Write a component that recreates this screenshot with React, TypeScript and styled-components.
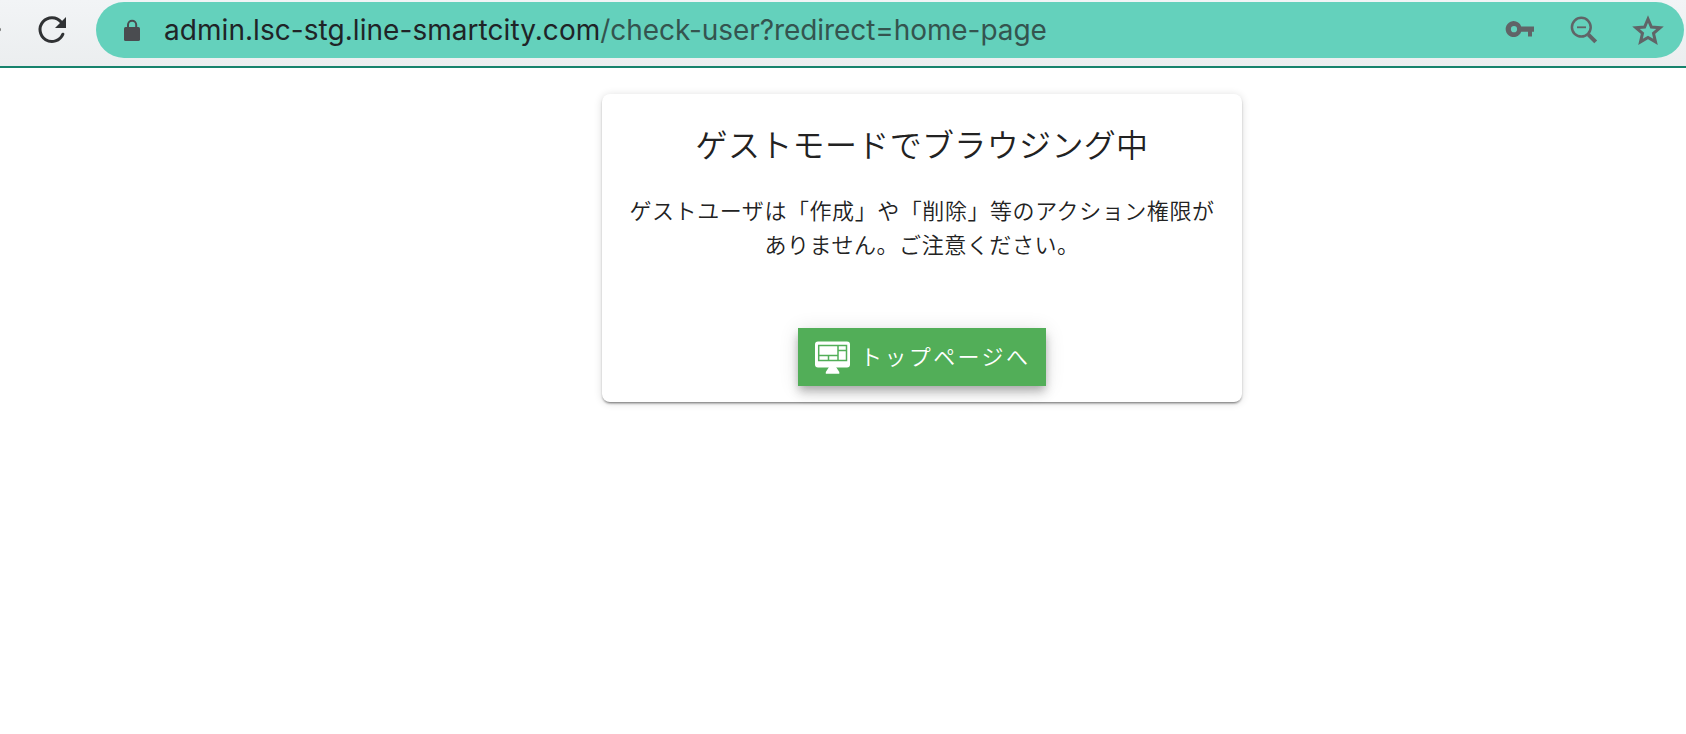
import React from "react";
import styled, { createGlobalStyle } from "styled-components";

const GlobalStyle = createGlobalStyle`
  * { box-sizing: border-box; }
  body { margin: 0; background: #fff; }
`;

const Page = styled.div`
  min-height: 734px;
  overflow: hidden;
  background: #fff;
`;

const Toolbar = styled.header`
  display: flex;
  height: 68px;
  padding: 2px 2px 0 0;
  border-bottom: 2px solid #16836c;
  background: linear-gradient(#f2f4f6, #ebeeef);
`;

const Navigation = styled.div`
  display: flex;
  align-items: flex-start;
  width: 96px;
`;

const AddressBar = styled.div`
  display: flex;
  flex: 1;
  height: 56px;
  padding: 0 20px 0 28px;
  border-radius: 28px;
  background: #64d1bc;
`;

const Url = styled.div`
  flex: 1;
  margin-left: 24px;
  font: 400 28px/57px Inter, "Liberation Sans", sans-serif;
  letter-spacing: 0.05px;
  white-space: nowrap;
  color: #1f2427;
`;

const UrlPath = styled.span`
  letter-spacing: -0.07px;
  color: #34544f;
`;

const Actions = styled.div`
  display: flex;
  gap: 34px;
`;

const Icon = styled.svg<{ $w: number }>`
  display: block;
  flex: none;
  width: ${(p) => p.$w}px;
  height: 56px;
`;

const Card = styled.main`
  width: 640px;
  height: 308px;
  margin: 26px 0 0 602px;
  padding: 23px 24px 16px;
  display: flex;
  flex-direction: column;
  align-items: center;
  border-radius: 8px;
  background: #fff;
  box-shadow: 0 3px 1px -2px rgba(0, 0, 0, 0.2), 0 2px 2px rgba(0, 0, 0, 0.24),
    0 1px 8px rgba(0, 0, 0, 0.14);
  font-family: "Noto Sans CJK JP", sans-serif;
  color: #222;
  text-align: center;
`;

const Title = styled.h1`
  margin: 0;
  font-size: 32px;
  font-weight: 350;
  line-height: 52px;
  letter-spacing: 0.35px;
  white-space: nowrap;
`;

const Message = styled.p`
  margin: 23px 0 0;
  font-size: 22px;
  font-weight: 350;
  line-height: 34px;
  letter-spacing: 0.56px;
  white-space: nowrap;
`;

const HomeButton = styled.button`
  display: flex;
  align-items: center;
  width: 248px;
  height: 58px;
  margin-top: auto;
  padding: 0 0 0 17px;
  border: 0;
  background: #52ae58;
  box-shadow: 0 4px 8px -2px rgba(0, 0, 0, 0.2), 0 8px 10px rgba(0, 0, 0, 0.14),
    0 2px 20px rgba(0, 0, 0, 0.12);
  color: #fff;
  font: 350 22px/54px "Noto Sans CJK JP", sans-serif;
  letter-spacing: 2.4px;
  white-space: nowrap;
`;

const ButtonLabel = styled.span`
  margin-left: 9px;
  padding-bottom: 4px;
`;

export default function App() {
  return (
    <Page>
      <GlobalStyle />
      <Toolbar>
        <Navigation>
          <Icon $w={96} viewBox="0 2 96 56">
            <circle cx="-1" cy="29.5" r="2" fill="#777" />
            <path d="M62.9 34.2A11.9 11.9 0 1 1 61.1 22" fill="none" stroke="#303234" strokeWidth="3" strokeLinecap="round" />
            <path d="M66 17v11H55z" fill="#303234" />
          </Icon>
        </Navigation>
        <AddressBar>
          <Icon $w={16} viewBox="124 2 16 56">
            <rect x="124" y="27" width="16" height="14" rx="1.6" fill="#4a4c50" />
            <path d="M128 28v-3.2a4.1 4.1 0 0 1 8.2 0V28" fill="none" stroke="#4a4c50" strokeWidth="2" />
          </Icon>
          <Url>
            admin.lsc-stg.line-smartcity.com<UrlPath>/check-user?redirect=home-page</UrlPath>
          </Url>
          <Actions>
            <Icon $w={30} viewBox="1504 1.5 30 56">
              <path d="M1534 26v5.2h-2v4.8h-4v-4.8h-6.8a8 8 0 1 1 0-5.2zM1514 25.6a3.1 3.1 0 1 0 0 6.2 3.1 3.1 0 0 0 0-6.2z" fill="#606467" fillRule="evenodd" />
            </Icon>
            <Icon $w={30} viewBox="1568 2 30 56">
              <circle cx="1581.3" cy="27.2" r="9.4" fill="none" stroke="#606467" strokeWidth="2.5" />
              <path d="M1577 27.3h9" stroke="#606467" strokeWidth="1.8" />
              <path d="M1588.4 34.6l7.3 7.3" stroke="#606467" strokeWidth="4" />
            </Icon>
            <Icon $w={32} viewBox="1632 2 32 56">
              <path d="M1648 19l3.4 8 8.7.7-6.6 5.7 2 8.5-7.5-4.5-7.5 4.5 2-8.5-6.6-5.7 8.7-.7z" fill="none" stroke="#606467" strokeWidth="3" />
            </Icon>
          </Actions>
        </AddressBar>
      </Toolbar>
      <Card>
        <Title>ゲストモードでブラウジング中</Title>
        <Message>
          ゲストユーザは「作成」や「削除」等のアクション権限が
          <br />
          ありません。ご注意ください。
        </Message>
        <HomeButton>
          <Icon $w={36} viewBox="815 329 36 56">
            <rect x="815" y="341.5" width="35" height="26" rx="3" fill="#fff" />
            <path d="M829 367h7l3.3 5v1.7h-13.5V372z" fill="#fff" />
            <path d="M818.7 345.6h27.8v14.8h-27.8zM838 345.6v14.8M818.7 355.5h19.3M828.5 355.5v4.9M838 350.5h8.5" fill="none" stroke="#52ae58" strokeWidth="1.5" />
          </Icon>
          <ButtonLabel>トップページへ</ButtonLabel>
        </HomeButton>
      </Card>
    </Page>
  );
}
